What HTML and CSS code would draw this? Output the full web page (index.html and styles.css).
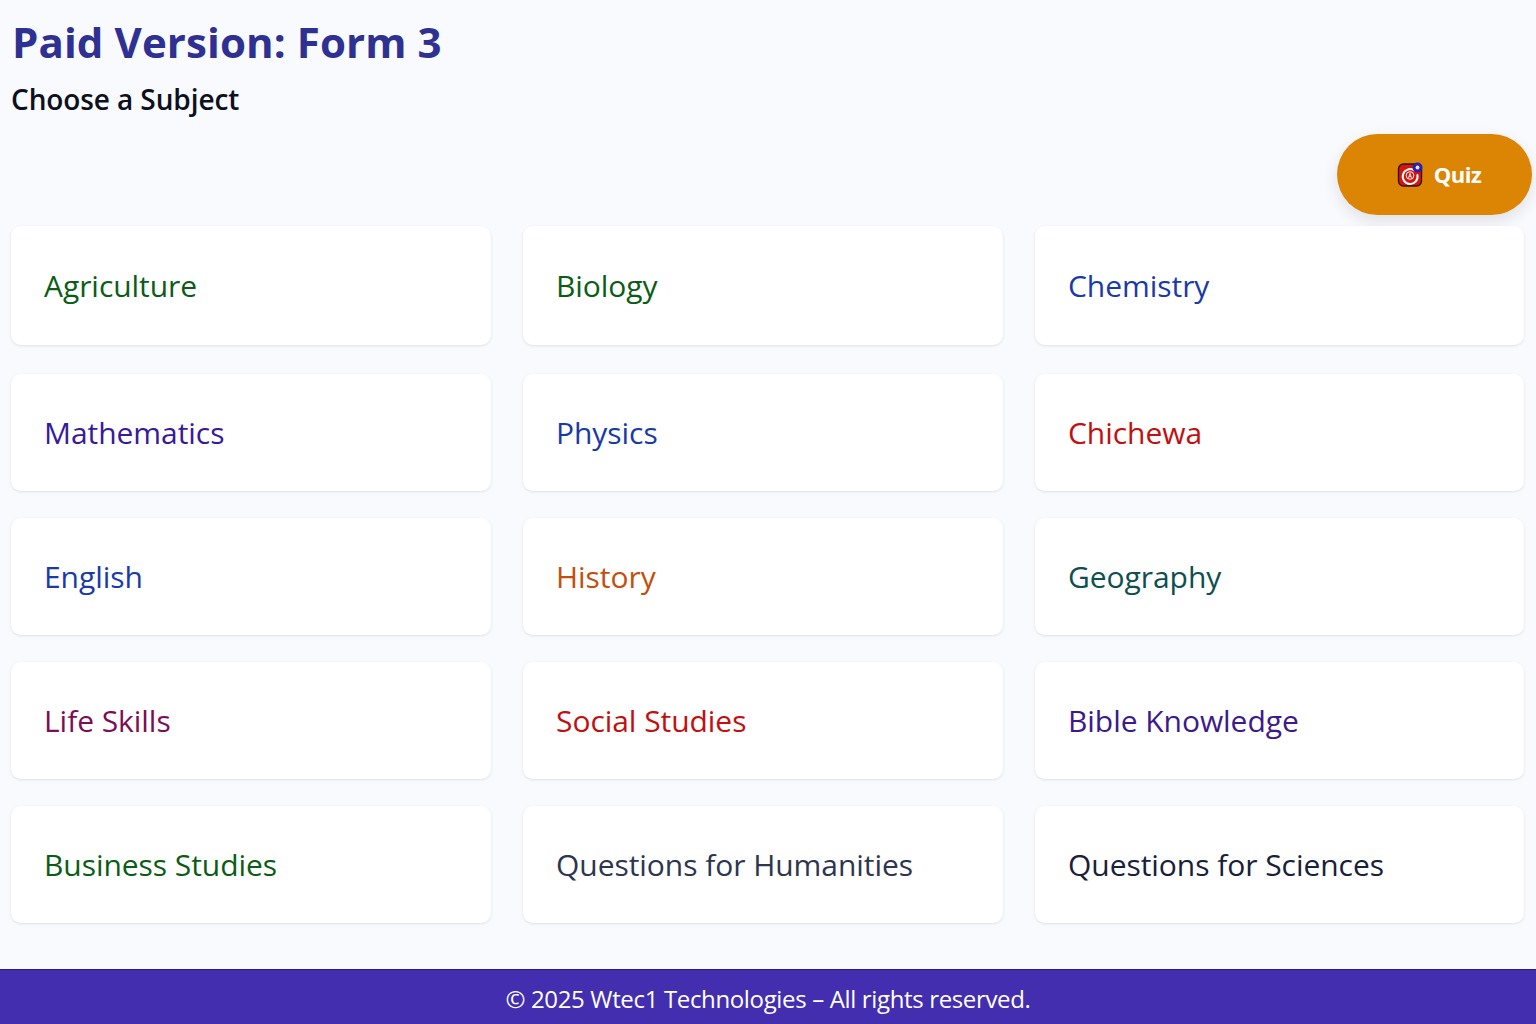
FILE: index.html
```html
<!DOCTYPE html>
<html lang="en">
<head>
    <meta charset="UTF-8">
    <meta name="viewport" content="width=device-width, initial-scale=1.0">
    <title>Paid Version: Form 3</title>
    <link rel="stylesheet" href="styles.css">
</head>
<body>
    <header class="page-header">
        <h1>Paid Version: Form 3</h1>
        <h2>Choose a Subject</h2>
    </header>

    <div class="quiz-row">
        <a class="quiz-button" href="#">
            <svg class="quiz-icon" width="27" height="27" viewBox="0 0 27 27">
                <rect x="1.5" y="3" width="23" height="22" rx="5" fill="#d8140f" stroke="#2a1512" stroke-width="1.4"/>
                <path d="M17 9.2A7.4 7.4 0 1 0 20.4 14" fill="none" stroke="#fff" stroke-width="2" stroke-linecap="round"/>
                <circle cx="13" cy="14.5" r="3.8" fill="none" stroke="#fff" stroke-width="1"/>
                <path d="M11.6 16.8l1.4-4.4 1.4 4.4M12.1 15.4h1.8" fill="none" stroke="#fff" stroke-width="0.9"/>
                <circle cx="20.5" cy="6.5" r="5" fill="#2a1fb5"/>
                <circle cx="20.5" cy="6.5" r="1.9" fill="#e8e8f8"/>
            </svg>
            <span>Quiz</span>
        </a>
    </div>

    <main class="subject-grid">
        <a class="subject-card green" href="#">Agriculture</a>
        <a class="subject-card green" href="#">Biology</a>
        <a class="subject-card blue" href="#">Chemistry</a>
        <a class="subject-card indigo" href="#">Mathematics</a>
        <a class="subject-card blue" href="#">Physics</a>
        <a class="subject-card red" href="#">Chichewa</a>
        <a class="subject-card blue" href="#">English</a>
        <a class="subject-card orange" href="#">History</a>
        <a class="subject-card teal" href="#">Geography</a>
        <a class="subject-card plum" href="#">Life Skills</a>
        <a class="subject-card red" href="#">Social Studies</a>
        <a class="subject-card purple" href="#">Bible Knowledge</a>
        <a class="subject-card green" href="#">Business Studies</a>
        <a class="subject-card slate" href="#">Questions for Humanities</a>
        <a class="subject-card navy" href="#">Questions for Sciences</a>
    </main>

    <footer class="page-footer">© 2025 Wtec1 Technologies – All rights reserved.</footer>
</body>
</html>
```

FILE: styles.css
```css
* {
    box-sizing: border-box;
}

body {
    font-family: "Open Sans", "Noto Sans", Arial, sans-serif;
    background-color: #f9fafe;
    margin: 0;
    height: 1024px;
    overflow: hidden;
}

.page-header {
    padding: 15px 0 0 12px;
}

h1 {
    margin: 0;
    font-size: 42px;
    line-height: 54px;
    font-weight: 700;
    color: #2e3192;
    letter-spacing: 0.1px;
}

h2 {
    margin: 11px 0 0 -1px;
    font-size: 28px;
    line-height: 38px;
    font-weight: 600;
    color: #0d1020;
    letter-spacing: -0.1px;
}

.quiz-row {
    display: flex;
    justify-content: flex-end;
    padding-right: 4px;
    margin-top: 16px;
}

.quiz-button {
    display: flex;
    align-items: center;
    justify-content: center;
    gap: 10px;
    width: 195px;
    height: 81px;
    padding-left: 9px;
    border-radius: 41px;
    background-color: #dc8504;
    color: #fff;
    font-size: 22px;
    font-weight: 700;
    letter-spacing: -0.5px;
    text-decoration: none;
    box-shadow: 0 6px 16px rgba(0, 0, 0, 0.1);
}

.quiz-button span {
    position: relative;
    top: -1px;
}

.subject-grid {
    display: grid;
    grid-template-columns: 480px 480px 489px;
    grid-template-rows: 121px repeat(4, 117px);
    column-gap: 32px;
    row-gap: 27px;
    padding-left: 11px;
    margin-top: 11px;
}

.subject-card {
    display: flex;
    align-items: center;
    padding-left: 33px;
    background-color: #fff;
    border-radius: 10px;
    box-shadow: 0 1px 3px rgba(0, 0, 0, 0.1);
    font-size: 30px;
    font-weight: 500;
    letter-spacing: -0.05px;
    text-decoration: none;
}

.subject-card:nth-child(-n+3) {
    margin-bottom: 2px;
}

.green { color: #0b5d16; }
.blue { color: #1a3aa8; }
.indigo { color: #371a9c; }
.red { color: #c20f0f; }
.orange { color: #c2500c; }
.teal { color: #0e4f50; }
.plum { color: #7c0e55; }
.purple { color: #3c1a8c; }
.slate { color: #2d3550; }
.navy { color: #18203a; }

.page-footer {
    position: fixed;
    left: 0;
    right: 0;
    bottom: 0;
    height: 55px;
    display: flex;
    align-items: center;
    justify-content: center;
    padding-top: 3px;
    background-color: #432eb0;
    border-top: 1px solid #2a1a86;
    color: #fff;
    font-size: 24px;
    letter-spacing: -0.35px;
}
```
